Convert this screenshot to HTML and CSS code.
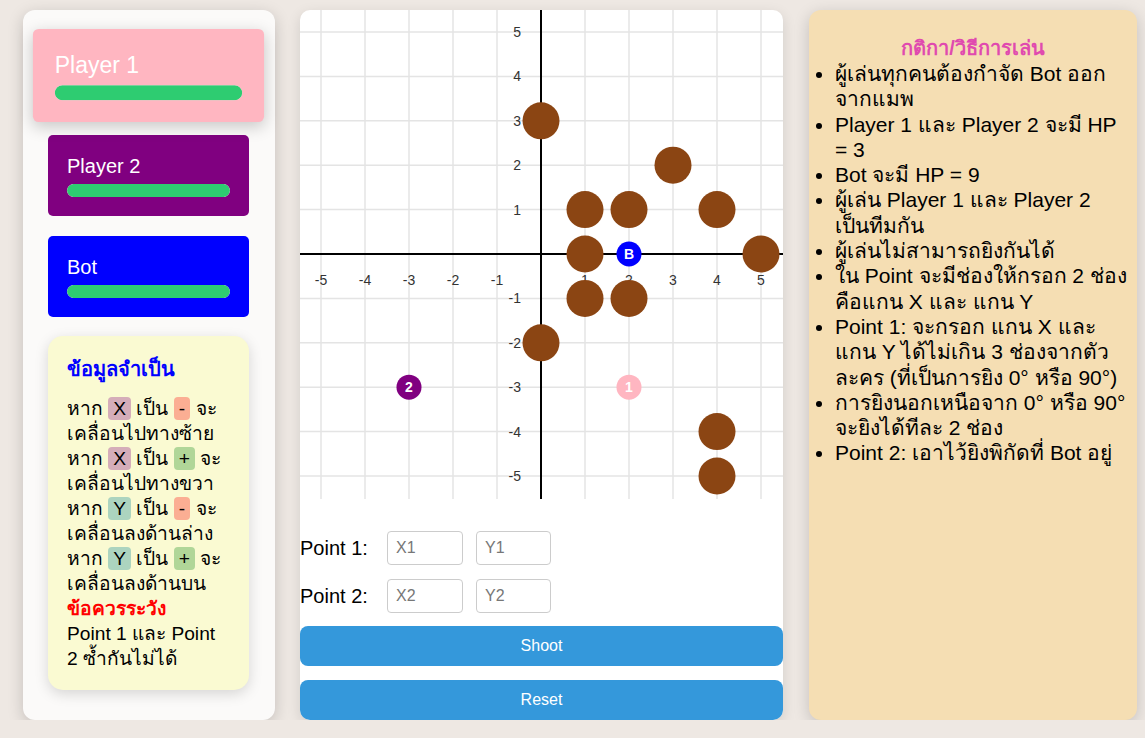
FILE: index.html
```html
<!DOCTYPE html>
<html lang="th">
<head>
<meta charset="utf-8">
<title>Bot Shooter</title>
<link rel="stylesheet" href="styles.css">
</head>
<body>
<div class="app">
  <aside class="side">
    <div class="card card-p1 active">
      <div class="card-name">Player 1</div>
      <div class="hp"><div class="hp-fill" style="width:100%"></div></div>
    </div>
    <div class="card card-p2">
      <div class="card-name">Player 2</div>
      <div class="hp"><div class="hp-fill" style="width:100%"></div></div>
    </div>
    <div class="card card-bot">
      <div class="card-name">Bot</div>
      <div class="hp"><div class="hp-fill" style="width:100%"></div></div>
    </div>
    <div class="info">
      <div class="info-title">ข้อมูลจำเป็น</div>
      <div>หาก <span class="chip chip-x">X</span> เป็น <span class="chip chip-minus">-</span> จะเคลื่อนไปทางซ้าย</div>
      <div>หาก <span class="chip chip-x">X</span> เป็น <span class="chip chip-plus">+</span> จะเคลื่อนไปทางขวา</div>
      <div>หาก <span class="chip chip-y">Y</span> เป็น <span class="chip chip-minus">-</span> จะเคลื่อนลงด้านล่าง</div>
      <div>หาก <span class="chip chip-y">Y</span> เป็น <span class="chip chip-plus">+</span> จะเคลื่อนลงด้านบน</div>
      <div class="warn">ข้อควรระวัง</div>
      <div>Point 1 และ Point 2 ซ้ำกันไม่ได้</div>
    </div>
  </aside>

  <main class="board">
    <svg class="graph" width="483" height="489" viewBox="0 0 483 489" xmlns="http://www.w3.org/2000/svg">
      <g stroke="#e4e4e4" stroke-width="1.5">
        <line x1="21" y1="0" x2="21" y2="489"/>
        <line x1="65" y1="0" x2="65" y2="489"/>
        <line x1="109" y1="0" x2="109" y2="489"/>
        <line x1="153" y1="0" x2="153" y2="489"/>
        <line x1="197" y1="0" x2="197" y2="489"/>
        <line x1="285" y1="0" x2="285" y2="489"/>
        <line x1="329" y1="0" x2="329" y2="489"/>
        <line x1="373" y1="0" x2="373" y2="489"/>
        <line x1="417" y1="0" x2="417" y2="489"/>
        <line x1="461" y1="0" x2="461" y2="489"/>
        <line x1="0" y1="22" x2="483" y2="22"/>
        <line x1="0" y1="66.4" x2="483" y2="66.4"/>
        <line x1="0" y1="110.8" x2="483" y2="110.8"/>
        <line x1="0" y1="155.2" x2="483" y2="155.2"/>
        <line x1="0" y1="199.6" x2="483" y2="199.6"/>
        <line x1="0" y1="288.4" x2="483" y2="288.4"/>
        <line x1="0" y1="332.8" x2="483" y2="332.8"/>
        <line x1="0" y1="377.2" x2="483" y2="377.2"/>
        <line x1="0" y1="421.6" x2="483" y2="421.6"/>
        <line x1="0" y1="466" x2="483" y2="466"/>
      </g>
      <g stroke="#000" stroke-width="2">
        <line x1="0" y1="244" x2="483" y2="244"/>
        <line x1="241" y1="0" x2="241" y2="489"/>
      </g>
      <g class="axis-label" text-anchor="middle">
        <text x="21" y="275">-5</text>
        <text x="65" y="275">-4</text>
        <text x="109" y="275">-3</text>
        <text x="153" y="275">-2</text>
        <text x="197" y="275">-1</text>
        <text x="285" y="275">1</text>
        <text x="329" y="275">2</text>
        <text x="373" y="275">3</text>
        <text x="417" y="275">4</text>
        <text x="461" y="275">5</text>
      </g>
      <g class="axis-label" text-anchor="end">
        <text x="221" y="27">5</text>
        <text x="221" y="71.4">4</text>
        <text x="221" y="115.8">3</text>
        <text x="221" y="160.2">2</text>
        <text x="221" y="204.6">1</text>
        <text x="221" y="293.4">-1</text>
        <text x="221" y="337.8">-2</text>
        <text x="221" y="382.2">-3</text>
        <text x="221" y="426.6">-4</text>
        <text x="221" y="471">-5</text>
      </g>
      <g fill="#8b4513">
        <circle cx="241" cy="110.8" r="18.5"/>
        <circle cx="373" cy="155.2" r="18.5"/>
        <circle cx="285" cy="199.6" r="18.5"/>
        <circle cx="329" cy="199.6" r="18.5"/>
        <circle cx="417" cy="199.6" r="18.5"/>
        <circle cx="285" cy="244" r="18.5"/>
        <circle cx="461" cy="244" r="18.5"/>
        <circle cx="285" cy="288.4" r="18.5"/>
        <circle cx="329" cy="288.4" r="18.5"/>
        <circle cx="241" cy="332.8" r="18.5"/>
        <circle cx="417" cy="421.6" r="18.5"/>
        <circle cx="417" cy="466" r="18.5"/>
      </g>
      <circle cx="329" cy="244" r="12.5" fill="#0000ff"/>
      <text class="marker" x="329" y="249">B</text>
      <circle cx="109" cy="377.2" r="12.5" fill="#800080"/>
      <text class="marker" x="109" y="382.2">2</text>
      <circle cx="329" cy="377.2" r="12.5" fill="#ffb6c1"/>
      <text class="marker" x="329" y="382.2">1</text>
    </svg>

    <div class="controls">
      <div class="row">
        <label class="row-label">Point 1:</label>
        <input class="coord" type="text" placeholder="X1">
        <input class="coord" type="text" placeholder="Y1">
      </div>
      <div class="row">
        <label class="row-label">Point 2:</label>
        <input class="coord" type="text" placeholder="X2">
        <input class="coord" type="text" placeholder="Y2">
      </div>
      <button class="btn">Shoot</button>
      <button class="btn">Reset</button>
    </div>
  </main>

  <aside class="rules">
    <h3 class="rules-title">กติกา/วิธีการเล่น</h3>
    <ul class="rules-list">
      <li>ผู้เล่นทุกคนต้องกำจัด Bot ออกจากแมพ</li>
      <li>Player 1 และ Player 2 จะมี HP = 3</li>
      <li>Bot จะมี HP = 9</li>
      <li>ผู้เล่น Player 1 และ Player 2 เป็นทีมกัน</li>
      <li>ผู้เล่นไม่สามารถยิงกันได้</li>
      <li>ใน Point จะมีช่องให้กรอก 2 ช่อง คือแกน X และ แกน Y</li>
      <li>Point 1: จะกรอก แกน X และ แกน Y ได้ไม่เกิน 3 ช่องจากตัวละคร (ที่เป็นการยิง 0° หรือ 90°)</li>
      <li>การยิงนอกเหนือจาก 0° หรือ 90° จะยิงได้ทีละ 2 ช่อง</li>
      <li>Point 2: เอาไว้ยิงพิกัดที่ Bot อยู่</li>
    </ul>
  </aside>
</div>
</body>
</html>
```

FILE: styles.css
```css
html, body {
  margin: 0;
  padding: 0;
}

body {
  background: #eee8e3;
  font-family: "Liberation Sans", Arial, "Noto Sans", sans-serif;
  color: #000;
}

.app {
  display: flex;
  align-items: flex-start;
  gap: 25px;
  padding: 10px 0 0 23px;
}

/* ---------- left column ---------- */
.side {
  width: 252px;
  height: 710px;
  box-sizing: border-box;
  flex-shrink: 0;
  background: #fbfaf9;
  border-radius: 12px;
  box-shadow: 0 4px 16px rgba(0, 0, 0, 0.18);
  padding: 24.5px 26px 0 25px;
  display: flex;
  flex-direction: column;
  gap: 19.5px;
}

.card {
  border-radius: 5px;
  padding: 20px 19px 19px;
  color: #fff;
}

.card-p1 { background: #ffb6c1; }
.card-p2 { background: #800080; }
.card-bot { background: #0000ff; }

.card.active {
  transform: scale(1.15);
  box-shadow: 0 4px 14px rgba(0, 0, 0, 0.2);
}

.card-name {
  font-size: 20px;
  line-height: 23px;
}

.hp {
  margin-top: 6px;
  height: 13px;
  border-radius: 7px;
  background: #ddd;
  overflow: hidden;
}

.hp-fill {
  height: 100%;
  background: #2ecc71;
  border-radius: 7px;
}

.info {
  background: #fafad2;
  border-radius: 15px;
  padding: 20px 19px 19px;
  box-shadow: 0 4px 14px rgba(0, 0, 0, 0.15);
  font-size: 19.2px;
  line-height: 25px;
}

.info-title {
  color: #0000ff;
  font-weight: bold;
  font-size: 20px;
  line-height: 26px;
  margin-bottom: 14px;
}

.warn {
  color: #ff0000;
  font-weight: bold;
}

.chip {
  padding: 1px 5px;
  border-radius: 4px;
}

.chip-x { background: #d5adb9; }
.chip-y { background: #acd4bf; }
.chip-minus { background: #fbae93; }
.chip-plus { background: #b0d698; }

/* ---------- center board ---------- */
.board {
  width: 483px;
  height: 710px;
  flex-shrink: 0;
  background: #fff;
  border-radius: 10px;
  overflow: hidden;
  box-shadow: 0 4px 14px rgba(0, 0, 0, 0.12);
  display: flex;
  flex-direction: column;
}

.graph {
  display: block;
}

.axis-label {
  font-family: "Liberation Sans", Arial, sans-serif;
  font-size: 14px;
  fill: #333;
}

.marker {
  font-family: "Liberation Sans", Arial, sans-serif;
  font-size: 14px;
  font-weight: bold;
  fill: #fff;
  text-anchor: middle;
}

.controls {
  padding-top: 32px;
  display: flex;
  flex-direction: column;
}

.row {
  display: flex;
  align-items: center;
  height: 34px;
  margin-bottom: 14px;
  font-size: 20px;
}

.row + .row {
  margin-bottom: 13px;
}

.row-label {
  width: 87px;
}

.coord {
  width: 76px;
  height: 34px;
  box-sizing: border-box;
  border: 1px solid #ccc;
  border-radius: 4px;
  padding: 0 8px;
  font-family: "Liberation Sans", Arial, sans-serif;
  font-size: 16px;
  margin: 0;
}

.coord + .coord {
  margin-left: 13px;
  width: 75px;
}

.coord::placeholder {
  color: #777;
}

.btn {
  height: 40px;
  border: 0;
  border-radius: 8px;
  background: #3498db;
  color: #fff;
  font-family: "Liberation Sans", Arial, sans-serif;
  font-size: 16px;
  padding: 0;
}

.btn + .btn {
  margin-top: 14px;
}

/* ---------- right column ---------- */
.rules {
  width: 328px;
  height: 710px;
  box-sizing: border-box;
  flex-shrink: 0;
  margin-left: 1px;
  background: #f5deb3;
  border-radius: 12px;
  box-shadow: 0 4px 16px rgba(0, 0, 0, 0.18);
  padding: 10px;
}

.rules-title {
  margin: 16px 0 0;
  text-align: center;
  color: #e04aaf;
  font-size: 20px;
  line-height: 25px;
  font-weight: bold;
}

.rules-list {
  margin: 0;
  padding-left: 16px;
  font-size: 21px;
  line-height: 25.3px;
}
```
